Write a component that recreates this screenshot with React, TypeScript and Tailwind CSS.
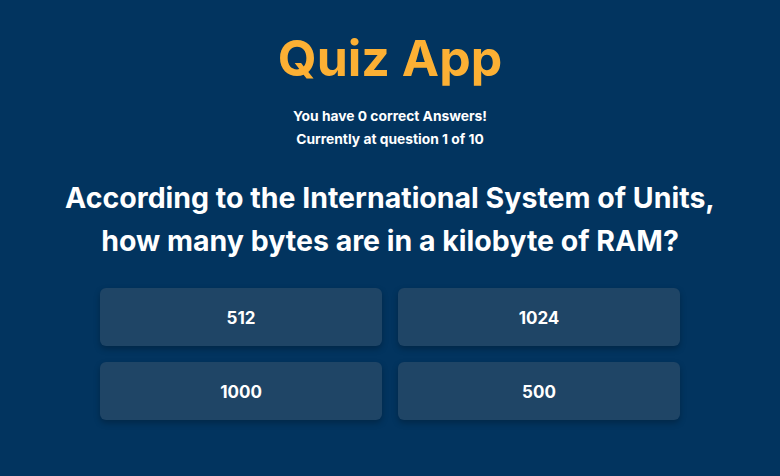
const answers = ["512", "1024", "1000", "500"];

export default function App() {
  return (
    <div
      className="flex min-h-[476px] w-full flex-col items-center bg-[#02345f] text-white"
      style={{ fontFamily: "Inter, 'Open Sans', sans-serif" }}
    >
      <h1 className="mt-[28px] text-[50px] leading-[60px] font-bold text-[#fcb034]">
        Quiz App
      </h1>
      <div className="mt-[17px] text-center text-[13.8px] leading-[23px] font-bold">
        <p>You have 0 correct Answers!</p>
        <p>Currently at question 1 of 10</p>
      </div>
      <h2 className="mt-[25px] text-center text-[28.5px] leading-[43px] font-bold">
        According to the International System of Units,
        <br />
        how many bytes are in a kilobyte of RAM?
      </h2>
      <div className="mt-[26px] grid w-[580px] grid-cols-2 gap-4">
        {answers.map((a) => (
          <button
            key={a}
            className="h-[58px] rounded-md bg-[#1f4566] pt-[3px] text-[17px] font-bold text-white shadow-[0_3px_6px_rgba(0,0,0,0.25)]"
          >
            {a}
          </button>
        ))}
      </div>
    </div>
  );
}
